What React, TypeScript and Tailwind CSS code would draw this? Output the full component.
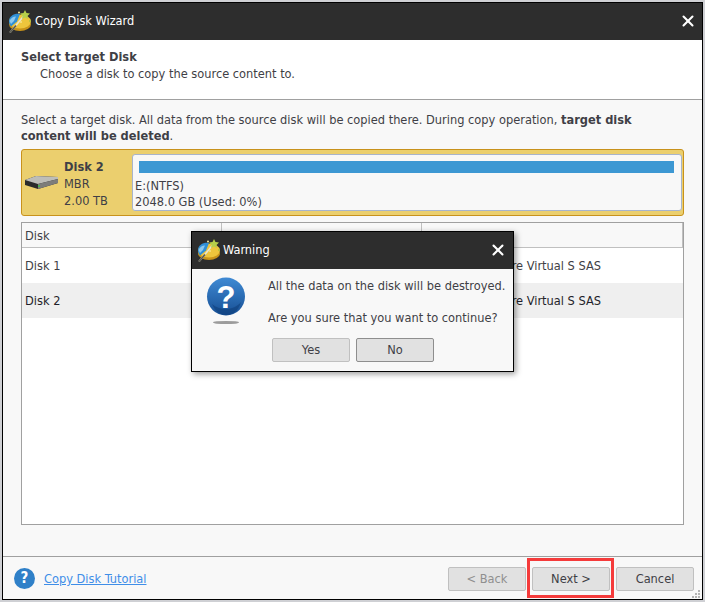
import { X } from "lucide-react"

function WizardLogo({ size = 24 }: { size?: number }) {
    return (
        <svg width={size} height={size} viewBox="0 0 24 24">
            <ellipse cx="12" cy="15.5" rx="11" ry="6.5" fill="#c9941a" />
            <ellipse cx="12" cy="12.5" rx="11" ry="7" fill="#eec53c" />
            <path d="M1 12.5 C1 6.5 7 4 12 5 L9 12.5 L3 17.5 C2 16 1 14.5 1 12.5Z" fill="#2f8fd6" />
            <path d="M1.5 12 C2.5 9.5 5 7.5 8 7.5 L6 12 L3 15Z" fill="#8cc8ee" />
            <path d="M2 23.5 L17 5.5" stroke="#e8e4d4" strokeWidth="1.6" />
            <path d="M2 23.5 L8 16.5" stroke="#5a5a50" strokeWidth="1.6" />
            <path d="M17 1 L18.5 4 L22 4.5 L19.5 7 L20 10 L17 8.5 L14 10 L14.5 7 L12 4.5 L15.5 4Z" fill="#b6cf4a" />
            <circle cx="11" cy="3.5" r="1" fill="#f4e9a0" />
            <circle cx="22" cy="12" r="1" fill="#a8c040" />
            <circle cx="13" cy="13" r="1" fill="#f7e28a" />
        </svg>
    )
}

function DiskIcon() {
    return (
        <svg width="33" height="13" viewBox="0 0 33 13">
            <path d="M0 4 L11 0 L33 1 L33 7 L13 13 L0 9Z" fill="#2b2b2b" />
            <path d="M0 4 L11 0 L33 1 L33 3 L13 8Z" fill="#bdbdb8" />
            <path d="M13 8 L33 3 L33 7 L13 13Z" fill="#7d7d7a" />
            <rect x="13" y="9" width="2" height="2" fill="#4caf50" />
        </svg>
    )
}

function BigQuestion() {
    return (
        <svg width="40" height="48" viewBox="0 0 40 48">
            <defs>
                <linearGradient id="q" x1="0" y1="0" x2="0" y2="1">
                    <stop offset="0" stopColor="#3f8ad4" />
                    <stop offset="1" stopColor="#174f94" />
                </linearGradient>
            </defs>
            <circle cx="20" cy="19.5" r="19" fill="url(#q)" />
            <path d="M6 27 C14 34 28 34 35 25 C32 35 26 38 20 38 C14 38 9 34 6 27Z" fill="#0f3f7c" opacity="0.6" />
            <text x="20" y="31" textAnchor="middle" fontSize="31" fontWeight="700" fill="#fff" fontFamily="Liberation Sans, sans-serif">?</text>
            <ellipse cx="20" cy="45.5" rx="13" ry="1.6" fill="#9c9c9c" />
        </svg>
    )
}

function Btn({ children, disabled, dark }: { children: string; disabled?: boolean; dark?: boolean }) {
    return (
        <button className={`w-[78px] h-[24px] rounded-[2px] border bg-[#e1e1e1] ${dark ? "border-[#8e8e8e]" : "border-[#c0c0c0]"} ${disabled ? "text-[#8f8f8f]" : "text-[#3f3f46]"}`}>
            {children}
        </button>
    )
}

const rows = [
    { name: "Disk 1", size: "500.00 GB", model: "VMware, VMware Virtual S SAS", active: false },
    { name: "Disk 2", size: "2.00 TB", model: "VMware, VMware Virtual S SAS", active: true },
]

export default function App() {
    return (
        <div className="relative w-[705px] h-[602px] bg-[#cfd0d4] p-[2px] overflow-hidden text-[12.7px] text-[#3f3f46]" style={{ fontFamily: "'DejaVu Sans Condensed', 'DejaVu Sans', sans-serif" }}>
            <div className="w-[701px] h-[598px] border border-black bg-[#f8f8f8] flex flex-col">
                <div className="h-[37px] bg-[#2d2d2d] flex items-center pl-[5px] pr-[5px] pb-[1px] text-white shrink-0">
                    <WizardLogo />
                    <span className="ml-[3px] text-[12.65px] flex-1">Copy Disk Wizard</span>
                    <X size={18} strokeWidth={2.75} />
                </div>
                <div className="h-[60px] bg-white border-b border-[#a0a0a0] pl-[18px] pt-[8px] shrink-0 leading-[17px]">
                    <div className="font-bold">Select target Disk</div>
                    <div className="pl-[19px]">Choose a disk to copy the source content to.</div>
                </div>
                <div className="px-[18px] pt-[12px] flex-1 flex flex-col min-h-0">
                    <p className="leading-[16px] w-[640px]">
                        Select a target disk. All data from the source disk will be copied there. During copy operation, <b>target disk content will be deleted</b>.
                    </p>
                    <div className="mt-[5px] h-[67px] bg-[#ebcf6e] border border-[#c8921c] rounded-[3px] flex shrink-0 py-[4px] pl-[3px] pr-[1px]">
                        <div className="w-[107px] flex items-center">
                            <DiskIcon />
                            <div className="ml-[6px] pt-[2px] leading-[17px]">
                                <div className="font-bold">Disk 2</div>
                                <div>MBR</div>
                                <div>2.00 TB</div>
                            </div>
                        </div>
                        <div className="flex-1 bg-[#f8f8f8] border border-[#a8b4cc] rounded-[3px] px-[2px] pt-[6px] leading-[16px]">
                            <div className="h-[12px] ml-[4px] mr-[5px] bg-[#3d98d3] mb-[5px]"></div>
                            <div>E:(NTFS)</div>
                            <div>2048.0 GB (Used: 0%)</div>
                        </div>
                    </div>
                    <div className="mt-[6px] h-[303px] border border-[#a0a0a0] bg-white shrink-0">
                        <div className="h-[25px] bg-[#f8f8f8] border-b border-[#c0c0c0] flex items-center">
                            <div className="w-[200px] h-full border-r border-[#c0c0c0] pl-[3px] leading-[25px]">Disk</div>
                            <div className="w-[200px] h-full border-r border-[#c0c0c0] pl-[3px] leading-[25px]">Capacity</div>
                            <div className="flex-1 h-full border-r border-[#c0c0c0] pl-[3px] leading-[25px]">Model</div>
                        </div>
                        {rows.map((r) => (
                            <div key={r.name} className={`h-[35px] pt-[1px] flex items-center ${r.active ? "bg-[#efefef] text-[#1f1f2b]" : ""}`}>
                                <div className="w-[200px] pl-[3px]">{r.name}</div>
                                <div className="w-[200px] pl-[3px]">{r.size}</div>
                                <div className="flex-1 pl-[3px]">{r.model}</div>
                            </div>
                        ))}
                    </div>
                </div>
                <div className="h-[43px] border-t border-[#a0a0a0] flex items-center pt-[1px] pl-[11px] pr-[8px] shrink-0">
                    <div className="w-[21px] h-[21px] rounded-full bg-[#2f80c8] text-white font-bold text-[15px] flex items-center justify-center">?</div>
                    <a className="ml-[9px] text-[#3f8ee8] underline flex-1">Copy Disk Tutorial</a>
                    <div className="flex gap-[6px]">
                        <Btn disabled>{"< Back"}</Btn>
                        <Btn>{"Next >"}</Btn>
                        <Btn>Cancel</Btn>
                    </div>
                </div>
            </div>

            {/* resize grip */}
            <svg className="absolute left-[692px] top-[590px]" width="9" height="9" viewBox="0 0 9 9" fill="#b4b4b4">
                <rect x="6" y="0" width="2" height="2" />
                <rect x="3" y="3" width="2" height="2" />
                <rect x="6" y="3" width="2" height="2" />
                <rect x="0" y="6" width="2" height="2" />
                <rect x="3" y="6" width="2" height="2" />
                <rect x="6" y="6" width="2" height="2" />
            </svg>

            {/* warning dialog */}
            <div className="absolute left-[191px] top-[231px] w-[323px] h-[141px] border border-black bg-[#f8f8f8] shadow-[2px_2px_6px_rgba(0,0,0,0.4)] flex flex-col">
                <div className="h-[37px] bg-[#2d2d2d] flex items-center pl-[5px] pr-[6px] pb-[1px] text-white shrink-0">
                    <WizardLogo />
                    <span className="ml-[2px] text-[12.65px] flex-1">Warning</span>
                    <X size={18} strokeWidth={2.75} />
                </div>
                <div className="flex pl-[14px] pt-[8px] h-[69px]">
                    <BigQuestion />
                    <div className="ml-[22px] leading-[16px] pt-[1px] whitespace-nowrap">
                        <div>All the data on the disk will be destroyed.</div>
                        <div className="mt-[16px]">Are you sure that you want to continue?</div>
                    </div>
                </div>
                <div className="flex gap-[6px] pl-[80px]">
                    <Btn>Yes</Btn>
                    <Btn dark>No</Btn>
                </div>
            </div>

            {/* red annotation */}
            <div className="absolute left-[527px] top-[558px] w-[87px] h-[40px] border-[3px] border-[#f53b3b]"></div>
        </div>
    )
}
